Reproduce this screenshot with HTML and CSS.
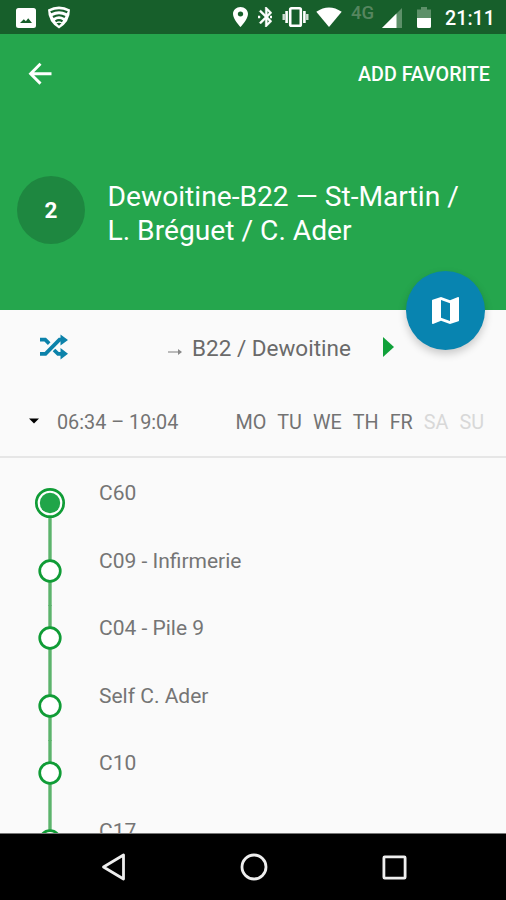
FILE: index.html
```html
<!DOCTYPE html>
<html lang="en">
<head>
<meta charset="utf-8">
<title>Line 2</title>
<link rel="stylesheet" href="styles.css">
</head>
<body>
<div class="phone">
  <div class="status">
    <svg class="i-image" width="20" height="20" viewBox="0 0 20 20"><path fill="#fff" fill-rule="evenodd" d="M2.5 0h15A2.5 2.5 0 0 1 20 2.5v15a2.5 2.5 0 0 1-2.500 2.500h-15A2.500 2.500 0 0 1 0 17.500v-15A2.500 2.500 0 0 1 2.500 0ZM4 15h12l-3.800-4.700-2.300 2.900-2.100-1.900Z"/></svg>
    <svg class="i-shield" width="24" height="23" viewBox="0 0 24 23"><path fill="#fff" d="M1 3.500Q12-2.500 23 3.500 23 16 12 22.500 1 16 1 3.500Z"/><path d="M3.700 6.300Q12 2.200 20.300 6.300M6 11Q12 7.500 18 11M8.500 15.300Q12 13 15.500 15.300" fill="none" stroke="#175f2b" stroke-width="2.200"/><path d="m9.500 17.200 2.500 2.500 2.500-2.500q-2.500-1-5 0Z" fill="#175f2b"/></svg>
    <svg class="i-pin" width="15" height="20" viewBox="5 2 14 20" preserveAspectRatio="none"><path fill="#fff" d="M12 2C8.130 2 5 5.130 5 9c0 5.250 7 13 7 13s7-7.750 7-13c0-3.870-3.130-7-7-7zm0 9.500a2.500 2.500 0 0 1 0-5 2.500 2.500 0 0 1 0 5z"/></svg>
    <svg class="i-bt" width="14" height="20" viewBox="5 2 14 20"><path fill="#fff" stroke="#fff" stroke-width=".4" d="M14.880 12 19 7.710 13.290 2h-1v7.590L7.700 5 6.290 6.410 11.880 12l-5.590 5.590L7.700 19l4.590-4.590V22h1L19 16.290 14.880 12zm-.590-6.170 1.880 1.880-1.880 1.880V5.830zm1.880 10.460-1.880 1.880v-3.760l1.880 1.880z"/><path fill="#fff" d="M5 10.800h2.200v2.400H5zM17 10.800h2v2.400h-2z"/></svg>
    <svg class="i-vib" width="27" height="20" viewBox="0 0 27 20"><rect x="8.200" y="1.300" width="10.600" height="17.400" rx="1.300" fill="none" stroke="#fff" stroke-width="2.600"/><path d="M4.600 4v12M22.400 4v12" stroke="#fff" stroke-width="2.600"/><path d="M1.700 7v6M25.300 7v6" stroke="#fff" stroke-opacity=".8" stroke-width="2.400"/></svg>
    <svg class="i-wifi" width="26" height="20" viewBox="0 0 26 20"><path fill="#fff" d="M.3 4.800Q13-4 25.700 4.800L13 20Z"/></svg>
    <span class="net">4G</span>
    <svg class="i-signal" width="20" height="20" viewBox="0 0 20 20"><path fill="#5d9069" d="M20 0v20H0Z"/><path fill="#fff" d="M14.500 5.500V20H0Z"/></svg>
    <svg class="i-batt" width="14" height="21" viewBox="0 0 14 21"><path fill="#5d9069" d="M4 0h6v2.500h4V11H0V2.500h4Z"/><path fill="#fff" d="M0 11h14v8.500a1.500 1.500 0 0 1-1.500 1.500h-11A1.500 1.500 0 0 1 0 19.500Z"/></svg>
    <span class="time">21:11</span>
  </div>
  <header class="hero">
    <div class="toolbar">
      <svg width="24" height="24" viewBox="0 0 24 24"><path fill="none" stroke="#fff" stroke-width="2.900" d="M12.500 1.800 2.600 11.700l9.900 9.900M2.800 11.700H23.500"/></svg>
      <span class="favorite">ADD FAVORITE</span>
    </div>
    <div class="line">
      <div class="badge">2</div>
      <h1 class="title">Dewoitine-B22 — St-Martin /<br>L. Bréguet / C. Ader</h1>
    </div>
    <div class="fab"><svg width="27" height="27" viewBox="3 3 18 18"><path fill="#fff" d="M20.500 3l-.160.030L15 5.100 9 3 3.360 4.900c-.210.070-.360.250-.360.480V20.500c0 .280.220.500.500.500l.160-.030L9 18.900l6 2.100 5.640-1.900c.210-.070.360-.250.360-.480V3.500c0-.280-.220-.500-.500-.500zM15 19l-6-2.110V5l6 2.110V19z"/></svg></div>
  </header>
  <div class="direction">
    <svg class="shuffle" width="30" height="26" viewBox="0 0 30 26"><path d="M1 5.600h5.200l4 4M1 19.800h5.500L20.500 5.600H24M15 16l4 3.800h5" fill="none" stroke="#0c82aa" stroke-width="3.700"/><path fill="#0c82aa" d="m21.500.5 7.500 5.500-7.500 5.500ZM21.500 14l7.500 5.700-7.500 5.800Z"/></svg>
    <svg class="arrow" width="14" height="8" viewBox="0 0 14 8"><path d="M0 4h11" stroke="#bbb" stroke-width="2"/><path fill="#888" d="m10 1 4 3-4 3Z"/></svg>
    <span class="dest">B22 / Dewoitine</span>
    <svg class="play" width="11" height="20" viewBox="0 0 11 20"><path fill="#10a13a" d="m0 0 11 10L0 20Z"/></svg>
  </div>
  <div class="schedule">
    <svg class="caret" width="10" height="6" viewBox="0 0 10 6"><path d="M0 .5h10L5 5.500Z"/></svg>
    <span class="hours">06:34 – 19:04</span>
    <div class="days"><span>MO</span><span>TU</span><span>WE</span><span>TH</span><span>FR</span><span class="off">SA</span><span class="off">SU</span></div>
  </div>
  <div class="stops">
    <div class="stop"><svg class="track" width="32" height="68" viewBox="0 0 32 68"><path d="M16 33v35" stroke="#5cb36c" stroke-width="3.400"/><circle cx="16" cy="33" r="13.700" fill="#fff" stroke="#109c36" stroke-width="2.700"/><circle cx="16" cy="33" r="10.200" fill="#20a549"/></svg><span>C60</span></div>
    <div class="stop"><svg class="track" width="32" height="68" viewBox="0 0 32 68"><path d="M16 0v68" stroke="#5cb36c" stroke-width="3.400"/><circle cx="16" cy="33" r="10.300" fill="#fff" stroke="#109c36" stroke-width="2.700"/></svg><span>C09 - Infirmerie</span></div>
    <div class="stop"><svg class="track" width="32" height="68" viewBox="0 0 32 68"><path d="M16 0v68" stroke="#5cb36c" stroke-width="3.400"/><circle cx="16" cy="33" r="10.300" fill="#fff" stroke="#109c36" stroke-width="2.700"/></svg><span>C04 - Pile 9</span></div>
    <div class="stop"><svg class="track" width="32" height="68" viewBox="0 0 32 68"><path d="M16 0v68" stroke="#5cb36c" stroke-width="3.400"/><circle cx="16" cy="33" r="10.300" fill="#fff" stroke="#109c36" stroke-width="2.700"/></svg><span>Self C. Ader</span></div>
    <div class="stop"><svg class="track" width="32" height="68" viewBox="0 0 32 68"><path d="M16 0v68" stroke="#5cb36c" stroke-width="3.400"/><circle cx="16" cy="33" r="10.300" fill="#fff" stroke="#109c36" stroke-width="2.700"/></svg><span>C10</span></div>
    <div class="stop"><svg class="track" width="32" height="68" viewBox="0 0 32 68"><path d="M16 0v68" stroke="#5cb36c" stroke-width="3.400"/><circle cx="16" cy="33" r="10.300" fill="#fff" stroke="#109c36" stroke-width="2.700"/></svg><span>C17</span></div>
  </div>
  <nav class="nav">
    <svg width="25" height="28" viewBox="0 0 25 28"><path fill="none" stroke="#eee" stroke-width="2.800" stroke-linejoin="round" d="M22.500 2v24L2.500 14Z"/></svg>
    <svg width="28" height="28" viewBox="0 0 28 28"><circle cx="14" cy="14" r="12" fill="none" stroke="#eee" stroke-width="2.800"/></svg>
    <svg width="25" height="25" viewBox="0 0 25 25"><rect x="1.900" y="1.900" width="21.200" height="21.200" rx=".8" fill="none" stroke="#eee" stroke-width="2.800"/></svg>
  </nav>
</div>
</body>
</html>
```
FILE: styles.css
```css
* { box-sizing: border-box; }
body { margin: 0; font-family: Roboto, "Liberation Sans", sans-serif; }
svg { display: block; flex: none; }
span { white-space: nowrap; }
.phone { width: 506px; height: 900px; display: flex; flex-direction: column; overflow: hidden; background: #fafafa; }

.status { height: 34px; flex: none; display: flex; align-items: flex-start; padding: 7px 0 0 16px; background: #175f2b; color: #fff; }
.i-shield { margin-left: 11px; margin-top: -1px; }
.i-pin { margin-left: 162px; }
.i-bt { margin-left: 10px; }
.i-vib { margin-left: 10px; }
.i-wifi { margin-left: 7px; }
.net { margin-left: 9px; width: 24px; font-size: 18.500px; font-weight: 500; line-height: 13px; color: #56865f; }
.i-image, .i-signal { margin-top: 1px; }
.i-signal { margin-left: 7px; }
.i-batt { margin-left: 15px; }
.time { margin-left: 14px; font-size: 19.700px; font-weight: 500; line-height: 23px; }

.hero { position: relative; height: 276px; flex: none; background: #25a64d; color: #fff; }
.toolbar { height: 80px; display: flex; align-items: center; justify-content: space-between; padding: 0 16px 0 28px; }
.favorite { font-size: 19.700px; font-weight: 500; }
.line { display: flex; align-items: flex-start; padding: 62px 0 0 17px; }
.badge { width: 68px; height: 68px; border-radius: 50%; background: #1e8740; display: flex; align-items: center; justify-content: center; font-size: 22.500px; font-weight: 700; }
.title { margin: 4px 0 0 22.500px; font-size: 28.200px; line-height: 33.500px; font-weight: 400; white-space: nowrap; }
.fab { position: absolute; left: 405.500px; top: 237px; width: 79px; height: 79px; border-radius: 50%; background: #0884b0; display: flex; align-items: center; justify-content: center; box-shadow: 0 4px 8px rgba(0,0,0,.2); }

.direction { height: 75px; flex: none; display: flex; align-items: center; padding-left: 39px; color: #6a6a6a; }
.shuffle { margin-top: -1px; }
.arrow { margin-left: 99px; margin-top: 8px; }
.dest { margin-left: 10px; width: 160px; font-size: 22.500px; }
.play { margin-left: 31px; margin-top: -1px; }

.schedule { height: 73px; flex: none; display: flex; align-items: center; padding: 3px 22px 0 29px; border-bottom: 2px solid #e6e6e6; color: #737373; font-size: 19.800px; }
.caret { margin-top: -2px; }
.hours { margin-left: 18px; }
.days { margin-left: auto; display: flex; gap: 11px; }
.off { color: #d8d8d8; }

.stops { flex: 1; min-height: 0; overflow: hidden; padding-top: 12px; color: #757575; font-size: 21px; }
.stop { height: 67.500px; display: flex; align-items: flex-start; padding-left: 33.500px; }
.stop span { margin-left: 33.500px; line-height: 24px; padding-top: 11px; }

.nav { height: 67px; flex: none; display: flex; align-items: center; justify-content: space-between; padding: 0 99px 0 101px; background: #000; border-top: 1px solid #777; }
```
